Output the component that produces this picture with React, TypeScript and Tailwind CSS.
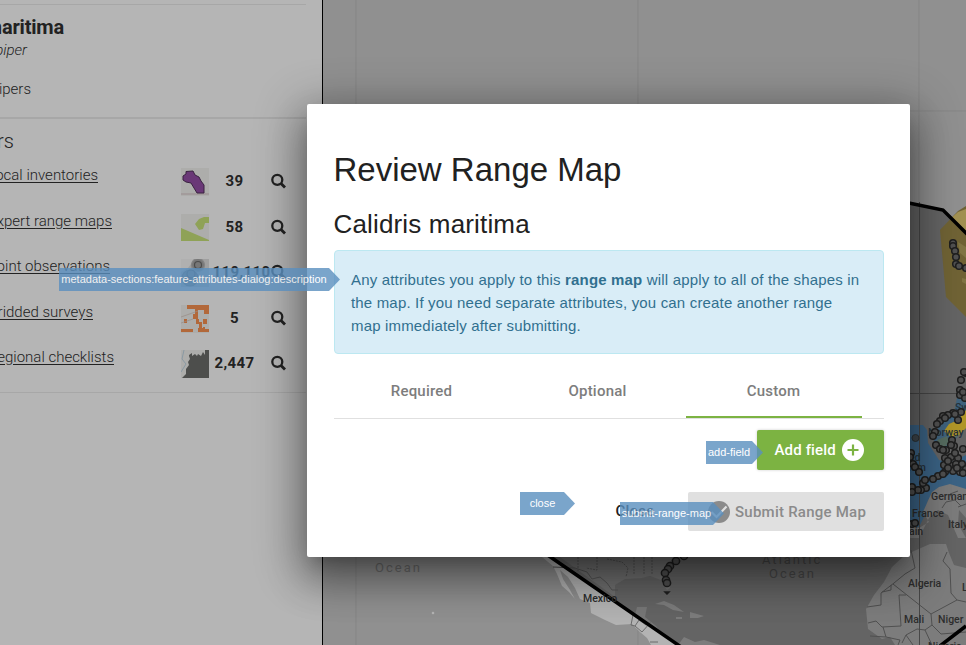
import React from 'react';

const layers = [
  { name: 'Local inventories', end: 'w-[98px]', count: '39', kind: 'local' },
  { name: 'Expert range maps', end: 'w-[112px]', count: '58', kind: 'range' },
  { name: 'Point observations', end: 'w-[110px]', count: '119,110', kind: 'points' },
  { name: 'Gridded surveys', end: 'w-[93px]', count: '5', kind: 'grid' },
  { name: 'Regional checklists', end: 'w-[114px]', count: '2,447', kind: 'check' },
];

function Thumb({ kind }: { kind: string }) {
  return (
    <svg className="block h-7 w-7 shrink-0" viewBox="0 0 28 28">
      <rect width="28" height="28" fill="#adadab" />
      {kind === 'local' && (
        <g>
          <path d="M0 26H28" stroke="#a39c9c" strokeWidth="2" />
          <path d="M2 8L5 6V3.500L12 3L14 7L18 9L20 13L23 17V25H16L13 20L10 15L5 14L2 12Z" fill="#6a3877" stroke="#3a2341" />
        </g>
      )}
      {kind === 'range' && (
        <g>
          <rect y="27" width="28" height="1" fill="#b5b5b5" />
          <path d="M0 14L28 26V27H0Z" fill="#8fa257" />
          <path d="M14 10L18 5L23 3H28V9L24 9L22 15L18 16Z" fill="#8fa257" />
        </g>
      )}
      {kind === 'points' && (
        <g>
          <rect width="28" height="28" fill="#9f9f9f" />
          <path d="M0 0H14L7 9L0 13Z" fill="#b0b0b0" />
          <g fill="#777" stroke="#4c4c4c" strokeWidth="1.2">
            <circle cx="17" cy="6" r="6.500" stroke="#858585" /><circle cx="17" cy="6" r="3.500" />
            <circle cx="9" cy="19" r="8" stroke="#666" /><circle cx="10" cy="15" r="4" />
          </g>
        </g>
      )}
      {kind === 'grid' && (
        <g fill="#b2683a">
          <path d="M6 0H28V9H23V5H17V14H18V17H21V23H18V19H15V14H12V9H14V4H6Z" />
          <path d="M3 14H6V18H3ZM22 14H26V19H22ZM0 24H12V27H0ZM17 23H22V22H24V24H28V27H17Z" />
          <path d="M0 12L17 6M0 18L12 14" stroke="#9a8c85" fill="none" strokeWidth=".7" />
        </g>
      )}
      {kind === 'check' && (
        <g>
          <path d="M3 0L1 9L5 14L0 22" stroke="#8999a3" fill="none" />
          <path d="M8 0V5L11 3V6L14 4L16 6L17 4L20 6L22 2L24 5V0H28V28H1L5 24V19L8 15L7 12L9 9L8 6Z" fill="#4d4e4c" />
        </g>
      )}
    </svg>
  );
}

function Sidebar() {
  return (
    <aside className="flex h-[645px] w-[323px] shrink-0 flex-col overflow-hidden border-r border-black bg-[#b5b5b5] font-['Roboto',sans-serif] text-[#222]">
      <div className="h-[5px] w-[306px] shrink-0 border-b border-[#a7a7a7]" />
      <header className="flex h-[114px] w-[306px] shrink-0 flex-col border-b-2 border-[#a7a7a7] whitespace-nowrap">
        <h2 className="mt-2 flex w-[64px] justify-end text-[20px] leading-7 font-bold tracking-[-0.2px]">Calidris maritima</h2>
        <em className="flex w-[27px] justify-end text-[15px] leading-[18px] font-light">Purple Sandpiper</em>
        <span className="mt-5 flex w-[31px] justify-end text-[15px] leading-5 font-light">Sandpipers</span>
      </header>
      <section className="flex h-[274px] w-[306px] shrink-0 flex-col border-b border-[#a7a7a7] whitespace-nowrap">
        <h3 className="mt-2.5 flex w-[14px] justify-end text-[20px] leading-6 font-light">Layers</h3>
        <div className="mt-[5px] flex flex-col">
          {layers.map((l) => (
            <div key={l.name} className="flex h-[45.5px] items-start pt-[10px]">
              <div className="flex w-[181px] shrink-0">
                <div className={'flex shrink-0 justify-end ' + l.end}>
                  <a className="-mt-[3px] text-[15px] leading-5 font-light underline underline-offset-2">{l.name}</a>
                </div>
              </div>
              <Thumb kind={l.kind} />
              <b className="flex h-[27px] w-[50px] shrink-0 items-center justify-center pl-px text-[15px] tracking-[0.35px]">
                <span className={l.kind === 'points' ? 'pl-3.5' : ''}>{l.count}</span>
              </b>
              <svg className="mt-[5px] ml-[12px] h-[16px] w-[16px] shrink-0" viewBox="0 0 16 16" fill="none" stroke="#222">
                <circle cx="6.300" cy="6.800" r="5" strokeWidth="2.300" />
                <path d="M10 10.500L14 14.500" strokeWidth="2.800" />
              </svg>
            </div>
          ))}
        </div>
      </section>
    </aside>
  );
}

const europePoints = [
  [953, 243], [953, 246], [955, 251], [956, 257], [956, 264], [959, 266], [966, 268],
  [966, 373], [961, 380], [964, 372], [960, 390], [960, 395], [965, 398], [963, 392],
  [961, 412], [953, 413], [948, 415], [943, 416], [940, 421], [937, 424], [935, 432], [933, 436], [958, 420], [955, 414], [945, 418],
  [936, 445], [940, 449], [946, 450], [952, 440], [954, 446], [951, 445], [943, 450],
  [945, 458], [951, 457], [958, 458], [963, 449], [955, 453], [944, 465], [950, 465], [956, 464], [962, 464], [948, 461],
  [945, 472], [953, 471], [960, 472], [966, 469], [948, 468], [957, 468], [963, 473], [938, 476], [933, 479], [943, 474],
  [926, 488], [923, 483], [925, 480], [921, 490], [918, 490], [912, 487], [912, 492], [911, 453], [913, 464], [915, 467], [919, 472], [910, 457], [912, 524], [915, 523],
];

const floridaPoints = [[684, 556], [676, 561], [670, 566], [668, 569], [665, 573], [666, 580], [667, 583]];

function MapView() {
  return (
    <main className="h-[645px] min-w-0 flex-1 bg-[#909090]">
      <svg className="block h-full w-full" viewBox="323 0 643 645" fontFamily="Roboto, sans-serif">
        <rect x="323" width="643" height="645" fill="#909090" />
        <path d="M356 0V645M638 0V645M919 0V645M323 111H966" stroke="#858585" fill="none" />
        <path d="M542 557L553 566L557 574L562 586L569 592L575 599L576 601L570 590L563 579L560 570L568 577L575 588L580 599L590 603L591 613L605 620L616 625L632 624L640 632L647 638L651 645H680L660 620L640 600L600 557Z" fill="#b3b3b3" />
        <path d="M536 547L680 645H942L966 626V228L943 210L904 202L500 190Z" fill="#646464" />
        <path d="M560 557L615 597V585L625 579L642 578L650 576L661 580L667 590L670 588L669 578L664 569L674 557Z" fill="#717171" />
        <path d="M637 607L647 607L645 617L656 626L660 631L648 624L635 615Z" fill="#777" />
        <path d="M655 604L664 601L674 605L684 612L673 610L664 605ZM690 612L704 616L698 618H690ZM676 617H682V619H676ZM678 645L684 637L695 642L704 640L720 645Z" fill="#7c7c7c" />
        <g fill="none" stroke="#545454" strokeWidth="1">
          <path d="M578 557V571M597 557V570L586 568M607 559L622 562L628 568L626 577M634 557V574M644 557V574M652 557V574" strokeDasharray="2 1" />
          <path d="M553 567L575 568L587 572L592 579L600 577L607 583L612 590H618" />
          <path d="M633 615L631 625L635 626L639 620L646 625L651 622M635 626L642 632L650 623M650 642H658" stroke="#6b6b6b" />
        </g>
        <path d="M905 425H923L927 430L928 443L939 460L950 463L966 455V491L950 486L937 489L928 500L924 517L919 527H905Z" fill="#3b6385" />
        <path d="M941 422L954 412L957 398L966 390V424L949 449L938 451L933 438Z" fill="#40637d" />
        <path d="M937 440L947 436L949 443L941 450Z" fill="#566c60" />
        <path d="M966 206L958 211L940 230L946 297L966 317Z" fill="#706335" />
        <path d="M966 209L958 212L950 219L966 234Z" fill="#a29152" />
        <path d="M958 242L966 247V258L960 253ZM962 278L966 279V284L962 282Z" fill="#817544" />
        <path d="M966 410L958 420L949 424L944 431L951 437L958 436L966 428Z" fill="#b09628" />
        <g fill="#7c7c7c">
          <path d="M929 522L923 512L927 503L932 492L939 487L950 484L966 489V518L959 510L958 524L966 538H958L948 515L938 510L929 518L919 538H905V526L919 528Z" />
          <path d="M914 551L930 544L946 544L949 553L954 565L966 568V645H895L890 637L882 639L868 629L866 609L874 595L884 582L892 567L904 556Z" />
        </g>
        <g fill="none" stroke="#505050">
          <path d="M911 550L915 568L905 574L894 583L881 593V605L867 607M893 584L931 614L957 600L966 602M891 585V590L882 592M906 595H899L901 626L882 627L876 621L868 623M931 614L932 625L925 630L917 629L906 635L902 643M932 625L941 634L966 632M947 552L943 561L950 569L951 593L957 600M883 627L886 637L870 636M906 635L913 645M925 630L932 645M886 637L900 640L898 645" />
          <path d="M942 508L946 502L955 500L961 506M953 500L950 494L958 491M958 507L966 504" />
        </g>
        <path d="M919.500 202V645M910 393.500H966" stroke="#474747" fill="none" />
        <path d="M904 202L943 210L969 236M536 547L684 649M940 646L966 626" stroke="#000" strokeWidth="3.500" fill="none" />
        <g fill="#26323b" fontSize="10.500" fontWeight="500"><text x="928" y="436">Norway</text><text x="955" y="411">Sweden</text><text x="909" y="461">ed</text><text x="905" y="471">dom</text></g>
        <circle cx="915.500" cy="438" r="3.500" fill="#40474c" stroke="#2d3337" />
        <g fill="#505050" stroke="#1f1f1f" strokeWidth="1.500">
          {europePoints.map(([x, y], i) => <circle key={i} cx={x} cy={y} r="3.300" />)}
          {floridaPoints.map(([x, y], i) => <circle key={i} cx={x} cy={y} r="3.600" />)}
          <path d="M665 592L669 592L667 594Z" />
        </g>
        <circle cx="433" cy="613" r="1.300" fill="#b5b5b5" />
        <g fill="#6c6c6c" fontSize="13" letterSpacing="2">
          <text x="375" y="572">Ocean</text>
          <g fill="#484848"><text x="762" y="564">Atlantic</text><text x="769" y="578">Ocean</text></g>
        </g>
        <g fill="#2d2d2d" fontSize="10.500" fontWeight="500">
          <text x="583" y="602">Mexico</text><text x="931" y="500">Germany</text><text x="912" y="517">France</text><text x="948" y="528">Italy</text><text x="909" y="535">ain</text>
          <text x="908" y="587">Algeria</text><text x="962" y="591">L</text><text x="904" y="623">Mali</text><text x="938" y="623">Niger</text><text x="928" y="650">Nigeria</text>
        </g>
      </svg>
    </main>
  );
}

function Tag({ text, place, body }: { text: string; place: string; body: string }) {
  return (
    <div className={'absolute flex h-[23px] opacity-80 ' + place}>
      <span className={'flex items-center justify-center bg-[#5a8fbf] text-[11px] whitespace-nowrap text-white ' + body}>{text}</span>
      <svg className="block h-[23px] w-[11px]" viewBox="0 0 11 23"><path d="M0 0L11 11.500L0 23Z" fill="#5a8fbf" /></svg>
    </div>
  );
}

function Dialog() {
  return (
    <section className="absolute top-[104px] left-[307px] flex h-[453px] w-[603px] flex-col rounded-[2px] bg-white pt-[42px] pr-[26px] pl-[27px] text-[#212121] shadow-[0_11px_15px_-7px_rgba(0,0,0,0.2),0_24px_38px_3px_rgba(0,0,0,0.24),0_9px_46px_8px_rgba(0,0,0,0.3)]">
      <h1 className="-ml-[0.5px] h-12 text-[33px] leading-[48px]">Review Range Map</h1>
      <h2 className="mt-[14px] -ml-[0.5px] h-8 text-[26px] leading-8 tracking-[0.16px]">Calidris maritima</h2>
      <div className="mt-[10px] h-[104px] rounded border border-[#bce8f1] bg-[#d9edf7] pt-[17px] pl-4 text-[15px] leading-[23px] tracking-[0.17px] whitespace-nowrap text-[#31708f]">
        Any attributes you apply to this <b>range map</b> will apply to all of the shapes in<br />
        the map. If you need separate attributes, you can create another range<br />
        map immediately after submitting.
      </div>
      <nav className="mt-[10px] flex h-[55px] border-b border-[#e0e0e0] pr-[22px] font-['Roboto',sans-serif] text-[15px] font-medium tracking-[0.22px] text-[#7d7d7d]">
        <span className="flex flex-1 items-center justify-center pr-px">Required</span>
        <span className="flex flex-1 items-center justify-center pr-px">Optional</span>
        <span className="flex flex-1 items-center justify-center border-b-2 border-[#7cb342] pt-0.5 pr-px">Custom</span>
      </nav>
      <div className="mt-[11px] flex justify-end">
        <button className="flex h-10 w-[127px] items-center rounded-[2px] bg-[#7cb342] pl-[17.5px] font-['Roboto',sans-serif] text-[15px] font-medium tracking-[0.15px] text-white shadow-[0_0_3px_rgba(0,0,0,0.2)]">
          Add field
          <svg className="ml-[6px] h-[22px] w-[22px]" viewBox="0 0 22 22"><circle cx="11" cy="11" r="11" fill="#fff" /><path d="M11 5.500V16.500M5.500 11H16.500" stroke="#7cb342" strokeWidth="2.200" /></svg>
        </button>
      </div>
      <div className="mt-[22px] flex items-center justify-end font-['Roboto',sans-serif] text-[15px] font-medium tracking-[0.24px]">
        <button className="mr-[33.5px]">Close</button>
        <div className="flex h-[39px] w-[196px] items-center rounded-[2px] bg-[#e0e0e0] pl-5 text-[#8b8b8b]">
          <svg className="mr-[5px] h-[22px] w-[22px]" viewBox="0 0 22 22"><circle cx="11" cy="11" r="11" fill="#8b8b8b" /><path d="M3.500 11L8.500 16L18.500 5.500" fill="none" stroke="#e0e0e0" strokeWidth="2.200" /></svg>
          <span className="pt-px whitespace-nowrap">Submit Range Map</span>
        </div>
      </div>
    </section>
  );
}

export default function App() {
  return (
    <div className="relative flex h-[645px] w-[966px] overflow-hidden font-['Liberation_Sans',Arial,sans-serif]">
      <Sidebar />
      <MapView />
      <Dialog />
      <Tag text="metadata-sections:feature-attributes-dialog:description" place="left-[59px] top-[268px]" body="w-[270px]" />
      <Tag text="add-field" place="left-[706px] top-[441px]" body="w-[46px]" />
      <Tag text="close" place="left-[520px] top-[492px]" body="w-[44px] pl-px" />
      <Tag text="submit-range-map" place="left-[620px] top-[502px]" body="w-[93px]" />
    </div>
  );
}
